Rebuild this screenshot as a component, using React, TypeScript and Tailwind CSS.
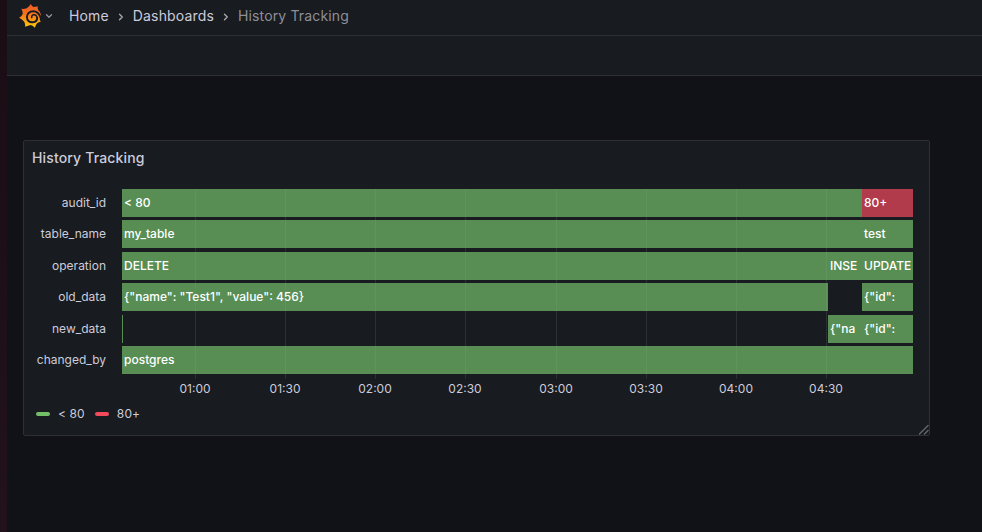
import React from "react";

type Segment = { left: number; width: number; label?: string; red?: boolean };
type Row = { name: string; gap: string; segments: Segment[] };

const rows: Row[] = [
  { name: "audit_id", gap: "mb-[3px]", segments: [{ left: 0, width: 740, label: "< 80" }, { left: 740, width: 51, label: "80+", red: true }] },
  { name: "table_name", gap: "mb-1", segments: [{ left: 0, width: 740, label: "my_table" }, { left: 740, width: 51, label: "test" }] },
  { name: "operation", gap: "mb-[3px]", segments: [{ left: 0, width: 706, label: "DELETE" }, { left: 706, width: 34, label: "INSE" }, { left: 740, width: 51, label: "UPDATE" }] },
  { name: "old_data", gap: "mb-1", segments: [{ left: 0, width: 706, label: '{"name": "Test1", "value": 456}' }, { left: 740, width: 51, label: '{"id":' }] },
  { name: "new_data", gap: "mb-[3px]", segments: [{ left: 0, width: 1 }, { left: 706, width: 34, label: '{"na' }, { left: 740, width: 51, label: '{"id":' }] },
  { name: "changed_by", gap: "", segments: [{ left: 0, width: 791, label: "postgres" }] },
];

const ticks = [
  { x: 73, label: "01:00" },
  { x: 163, label: "01:30" },
  { x: 253, label: "02:00" },
  { x: 343, label: "02:30" },
  { x: 434, label: "03:00" },
  { x: 524, label: "03:30" },
  { x: 614, label: "04:00" },
  { x: 704, label: "04:30" },
];

function Separator() {
  return (
    <svg className="mx-[9px] mt-px h-2 w-[6px] shrink-0" viewBox="0 0 6 8" fill="none" stroke="#a5a6af" strokeWidth="1.4" strokeLinecap="round" strokeLinejoin="round">
      <path d="M1.5 1.2 4.3 4 1.5 6.8" />
    </svg>
  );
}

// Toothed flame with a spiral cut out of it.
function Logo() {
  return (
    <svg className="h-6 w-6 shrink-0" viewBox="0 0 24 24" fill="none">
      <defs>
        <linearGradient id="flame" x1="0" y1="0" x2="0" y2="24" gradientUnits="userSpaceOnUse">
          <stop offset="0" stopColor="#f05a28" />
          <stop offset="0.4" stopColor="#f4701f" />
          <stop offset="1" stopColor="#fdd00a" />
        </linearGradient>
      </defs>
      <path
        fill="url(#flame)"
        d="M11.8 0 Q12.6 2.1 14.5 3.1 Q16.5 2.3 18.9 2.5 Q18.4 4.4 19.2 6 Q21.5 7.8 22 11 L20.9 14.2 Q20.2 16 21.8 17.8 Q19.6 18.2 18.1 19.2 Q16.4 21.2 15.8 23.8 Q14.2 21.8 11.8 21 Q9 21.5 6.2 22.7 Q6.5 20 5.2 17.8 Q3 15.2 .2 13.8 Q2.8 12.4 3.8 9.8 Q3.8 7.2 2.3 4.8 Q5.2 5.3 7.8 4.2 Q10.4 2.6 11.8 0Z"
      />
      <path
        stroke="#181b1f"
        strokeWidth="1.9"
        strokeLinecap="round"
        d="M21.6 13.6 C20.2 9.2 17.6 7.3 14.2 7.3 C10.4 7.3 7.9 10 7.9 13.1 C7.9 16.3 10.4 18.5 13.6 18.3 C16.4 18.1 18.3 16.2 18.2 13.7"
      />
      <path
        stroke="#181b1f"
        strokeWidth="1.5"
        strokeLinecap="round"
        d="M18.1 13.7 C17.9 11.6 16.2 10.5 14.6 10.8 C13.1 11.1 12.3 12.4 12.8 13.6"
      />
    </svg>
  );
}

function TopBar() {
  return (
    <header className="flex h-9 items-center border-b border-[#2d2f34] bg-[#181b1f] pb-[3px] pl-3">
      <Logo />
      <svg className="ml-[2px] h-2 w-2 shrink-0" viewBox="0 0 8 8" fill="none" stroke="#9293a0" strokeWidth="1.3" strokeLinecap="round" strokeLinejoin="round">
        <path d="M1.5 2.8 4 5.2 6.5 2.8" />
      </svg>
      <nav className="ml-4 flex items-center whitespace-nowrap text-sm tracking-[0.01071em] text-[#ccccdc]">
        <span>Home</span>
        <Separator />
        <span>Dashboards</span>
        <Separator />
        <span className="text-[#8e8e99]">History Tracking</span>
      </nav>
    </header>
  );
}

function Timeline() {
  return (
    <div className="flex text-xs">
      <div className="w-[98px] shrink-0 pr-4 text-right text-[#ccccdc]">
        {rows.map((row) => (
          <div key={row.name} className={`h-7 leading-7 ${row.gap}`}>{row.name}</div>
        ))}
      </div>
      <div className="relative w-[791px]">
        {ticks.map((tick) => (
          <div key={tick.label} className="absolute top-0 h-[190px] w-px bg-[#2c2f33]" style={{ left: tick.x }} />
        ))}
        {rows.map((row) => (
          <div key={row.name} className={`relative h-7 ${row.gap}`}>
            {row.segments.map((segment) => (
              <div
                key={segment.left}
                className={`absolute top-0 h-7 overflow-hidden whitespace-nowrap font-medium leading-7 text-white ${segment.label ? "pl-0.5" : ""} ${segment.red ? "bg-[#f2495cb3]" : "bg-[#73bf69b3]"}`}
                style={{ left: segment.left, width: segment.width }}
              >
                {segment.label}
              </div>
            ))}
          </div>
        ))}
        <div className="relative mt-[7px] h-4 text-[#ccccdc]">
          {ticks.map((tick) => (
            <span key={tick.label} className="absolute top-0 -translate-x-1/2 leading-4" style={{ left: tick.x }}>{tick.label}</span>
          ))}
        </div>
      </div>
    </div>
  );
}

function Legend() {
  return (
    <div className="mt-2 flex h-[18px] items-center pl-3 text-xs tracking-[0.01071em] text-[#ccccdc]">
      <span className="mr-2 h-1 w-[14px] rounded-full bg-[#73bf69]" />
      <span>&lt; 80</span>
      <span className="ml-[10px] mr-2 h-1 w-[14px] rounded-full bg-[#f2495c]" />
      <span>80+</span>
    </div>
  );
}

export default function App() {
  return (
    <div className="flex h-[532px] w-[982px] overflow-hidden bg-[#111217] font-[Inter,sans-serif]">
      <div className="w-[7px] shrink-0 bg-gradient-to-b from-[#1a0d14] to-[#21121b]" />
      <div className="min-w-0 flex-1">
        <TopBar />
        <div className="h-10 border-b border-[#2d2f34] bg-[#181b1f]" />
        <main className="pl-4 pt-16">
          <section className="relative h-[296px] w-[907px] rounded-[2px] border border-[#2d2f34] bg-[#181b1f]">
            <h2 className="flex h-8 items-center pl-2 pt-0.5 text-sm font-medium tracking-[0.01071em] text-[#ccccdc]">History Tracking</h2>
            <div className="pt-4">
              <Timeline />
            </div>
            <Legend />
            <svg className="absolute bottom-0 right-0 h-[10px] w-[10px]" viewBox="0 0 10 10" stroke="#66676f" strokeWidth="1.3">
              <path d="M0 9.5L9.5 0M5 9.5l4.5-4.5" />
            </svg>
          </section>
        </main>
      </div>
    </div>
  );
}
